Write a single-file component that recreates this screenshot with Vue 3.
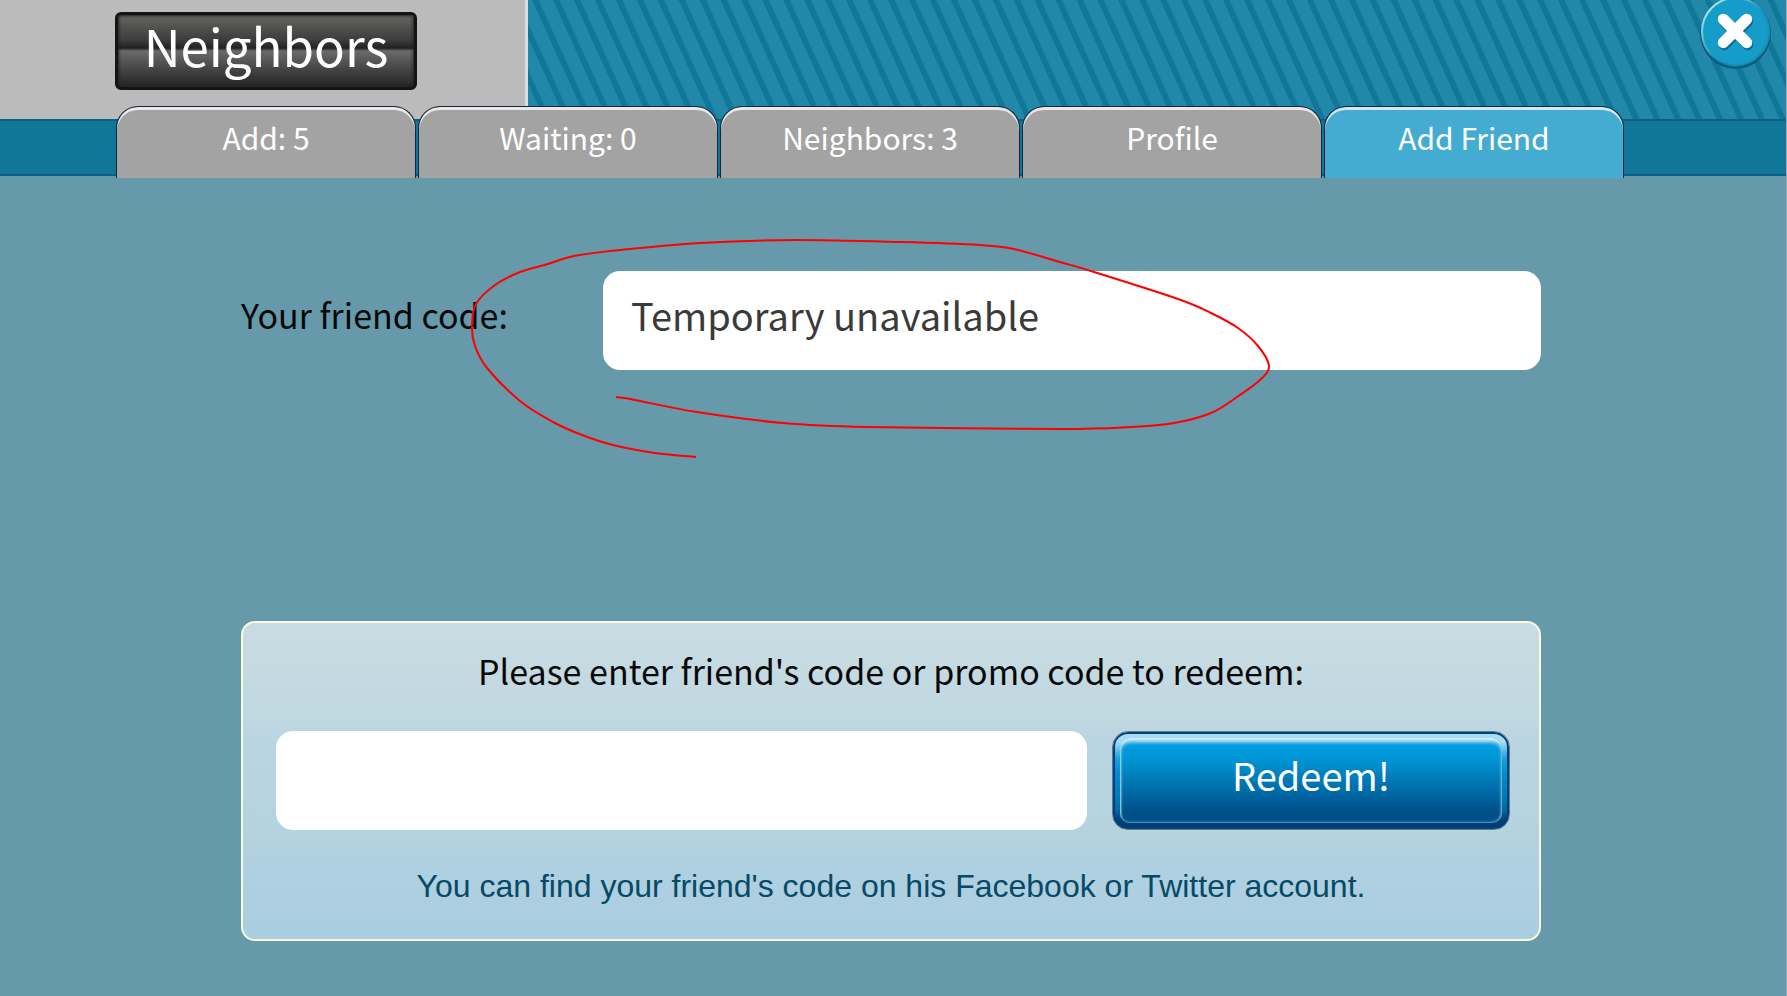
<script setup>
import { ref } from 'vue'

const tabs = ['Add: 5', 'Waiting: 0', 'Neighbors: 3', 'Profile', 'Add Friend']
const active = ref(4)
const friendCode = ref('Temporary unavailable')
const promo = ref('')

// Hand-drawn marker stroke, smoothed through its points.
const points = [
  [696, 457], [655, 453], [613, 445], [582, 435], [553, 422], [520, 401], [487, 368], [475, 346], [472, 327],
  [476, 304], [495, 285], [520, 272], [548, 264], [574, 256], [620, 250], [700, 243],
  [793, 240], [900, 242], [980, 245], [1014, 249], [1060, 262], [1094, 272], [1178, 299],
  [1211, 313], [1238, 328], [1258, 346], [1269, 366], [1260, 380], [1237, 397], [1211, 413], [1174, 423],
  [1131, 427], [1060, 429], [867, 427], [783, 423], [697, 412], [635, 400], [616, 397]
]
const marker = points.slice(1).reduce((d, p, k) => {
  const a = points[Math.max(k - 1, 0)]
  const b = points[k]
  const c = points[Math.min(k + 2, points.length - 1)]
  const x1 = b[0] + (p[0] - a[0]) / 6
  const y1 = b[1] + (p[1] - a[1]) / 6
  const x2 = p[0] - (c[0] - b[0]) / 6
  const y2 = p[1] - (c[1] - b[1]) / 6
  return `${d} C${x1} ${y1} ${x2} ${y2} ${p[0]} ${p[1]}`
}, `M${points[0][0]} ${points[0][1]}`)
</script>

<template>
  <div class="page">
    <header class="header">
      <div class="backdrop">
        <div class="banner">
          <div class="plate"></div>
          <svg class="stripes" aria-hidden="true">
            <defs>
              <pattern id="stripe" width="20.94" height="119" x="4" patternUnits="userSpaceOnUse" patternTransform="skewX(24.4)">
                <rect width="6.5" height="119" fill="#117799" />
              </pattern>
            </defs>
            <rect width="100%" height="100%" fill="url(#stripe)" />
          </svg>
        </div>
        <div class="bar"></div>
      </div>
      <div class="front">
        <div class="top">
          <h1 class="title">Neighbors</h1>
          <button class="close" type="button" aria-label="Close">
            <svg viewBox="0 0 70 70" aria-hidden="true">
              <defs>
                <linearGradient id="rim" x1="0.1" y1="0.1" x2="0.75" y2="0.75">
                  <stop offset="0" stop-color="#b8f0f0" />
                  <stop offset="0.4" stop-color="#4fb4cc" />
                  <stop offset="0.7" stop-color="#1590b8" />
                </linearGradient>
              </defs>
              <circle cx="35" cy="35" r="35" fill="#0b5a78" />
              <circle cx="35" cy="34" r="34" fill="#176f8e" />
              <circle cx="35" cy="33" r="33" fill="#159cc8" stroke="url(#rim)" stroke-width="2" />
              <path d="M24 23 47 46M47 23 24 46" stroke="#0a6c94" stroke-width="11" stroke-linecap="round" />
              <path d="M23 21 46 44M46 21 23 44" stroke="#fff" stroke-width="11" stroke-linecap="round" />
            </svg>
          </button>
        </div>
        <nav class="tabs">
          <button
            v-for="(tab, i) in tabs"
            :key="tab"
            type="button"
            class="tab"
            :class="{ active: i === active }"
            @click="active = i"
          >{{ tab }}</button>
        </nav>
      </div>
    </header>

    <main class="main">
      <div class="own">
        <label class="label" for="own-code">Your friend code:</label>
        <input id="own-code" v-model="friendCode" class="field" type="text" readonly />
      </div>

      <form class="panel" @submit.prevent>
        <label class="label" for="promo">Please enter friend's code or promo code to redeem:</label>
        <div class="row">
          <input id="promo" v-model="promo" class="field" type="text" />
          <button class="redeem" type="submit">Redeem!</button>
        </div>
        <p class="hint">You can find your friend's code on his Facebook or Twitter account.</p>
      </form>
    </main>

    <svg class="marker" width="1300" height="480" aria-hidden="true">
      <path :d="marker" fill="none" stroke="#f00" stroke-width="2" />
    </svg>
  </div>
</template>

<style>
body {
  background: #6699aa;
}
</style>

<style scoped>
* {
  box-sizing: border-box;
}

.page {
  position: relative;
  min-height: 100vh;
  background: #6699aa;
  border-right: 1px solid #88b0bd;
  font-family: "Noto Sans CJK SC", "Open Sans", sans-serif;
}

.header {
  display: grid;
}

.backdrop,
.front {
  grid-area: 1 / 1;
}

.banner {
  display: flex;
  height: 119px;
}

.plate {
  width: 528px;
  background: #bbbbbb;
  border-right: 3px solid #d9dddd;
}

.stripes {
  flex: 1;
  height: 119px;
  background: #2288aa;
}

.bar {
  height: 57px;
  background: #117799;
  border-top: 2px solid #0d6080;
  border-bottom: 2px solid #0d6080;
}

.top {
  display: flex;
  justify-content: space-between;
  align-items: flex-start;
  height: 106px;
  padding: 0 15px 0 115px;
}

.title {
  margin: 12px 0 0;
  width: 302px;
  height: 78px;
  padding-bottom: 12px;
  display: flex;
  align-items: center;
  justify-content: center;
  border: 3px solid #141414;
  border-radius: 6px;
  background: linear-gradient(#666560, #3c3c3c 35%, #222 46%, #6a6a69 50%, #454545 75%, #242424);
  box-shadow: inset 0 0 3px 1px #222;
  color: #fff;
  font-size: 51px;
  line-height: 60px;
  font-weight: 400;
}

.close {
  width: 71px;
  height: 71px;
  margin-top: -2px;
  padding: 0;
  border: 0;
  background: none;
}

.close svg {
  display: block;
}

.tabs {
  display: grid;
  grid-template-columns: repeat(5, 1fr);
  gap: 2px;
  padding: 0 162px 0 116px;
}

.tab {
  height: 72px;
  padding: 0 0 12px;
  border: 1px solid #13283a;
  border-bottom: 0;
  border-radius: 22px 22px 0 0;
  background: #a3a3a3;
  box-shadow: inset 0 3px 0 #e8e8e8;
  color: #fff;
  font-family: inherit;
  font-size: 30px;
  line-height: 40px;
}

.tab.active {
  background: #43acd0;
  box-shadow: inset 0 3px 0 #cfe9f3;
}

.main {
  padding: 93px 245px 55px 241px;
}

.own {
  display: grid;
  grid-template-columns: 362px 1fr;
  align-items: center;
}

.label {
  font-size: 34px;
  line-height: 40px;
  color: #080808;
}

.own .label {
  padding-bottom: 12px;
}

.field {
  width: 100%;
  min-width: 0;
  height: 99px;
  padding: 0 28px 12px;
  border: 0;
  border-radius: 17px;
  background: #fff;
  color: #3a3a3a;
  font-family: inherit;
  font-size: 38px;
  outline: none;
}

.panel {
  display: flex;
  flex-direction: column;
  align-items: center;
  margin-top: 251px;
  padding: 28px 29px 33px;
  border: 2px solid #fbf8dc;
  border-radius: 14px;
  background: linear-gradient(#c9dce2, #c0d8e1 30%, #bbd5e2 35%, #b4d3df 68%, #b1d1e1 72%, #a9cde0);
}

.row {
  display: flex;
  gap: 25px;
  width: 100%;
  margin-top: 40px;
  padding-left: 4px;
}

.row .field {
  flex: 1;
}

.redeem {
  position: relative;
  isolation: isolate;
  width: 398px;
  height: 99px;
  padding: 0 0 12px;
  border: 1px solid #627b8e;
  border-radius: 16px;
  background: linear-gradient(#a6dcf3 10px, #1aa3df 26px, #0090d2 40%, #006cab 80%, #004078 90%, #003c70);
  box-shadow: inset 0 0 0 2px #03417a;
  color: #fff;
  font-family: inherit;
  font-size: 38px;
  line-height: 40px;
}

.redeem::before {
  content: "";
  position: absolute;
  inset: 6px 7px;
  z-index: -1;
  border-radius: 10px;
  background: linear-gradient(#009ade, #0098d8 22%, #004f88 88%, #00528a);
  box-shadow: inset 0 5px 4px -1px #d9f1fb, inset 1px 1px 2px #8fcdea, inset -1px -1px 2px #4d9ccc;
}

.hint {
  margin: 36px 0 0;
  font-family: "Liberation Sans", Arial, sans-serif;
  font-size: 32px;
  line-height: 40px;
  color: #064a66;
}

.marker {
  position: absolute;
  left: 0;
  top: 0;
  pointer-events: none;
}
</style>
